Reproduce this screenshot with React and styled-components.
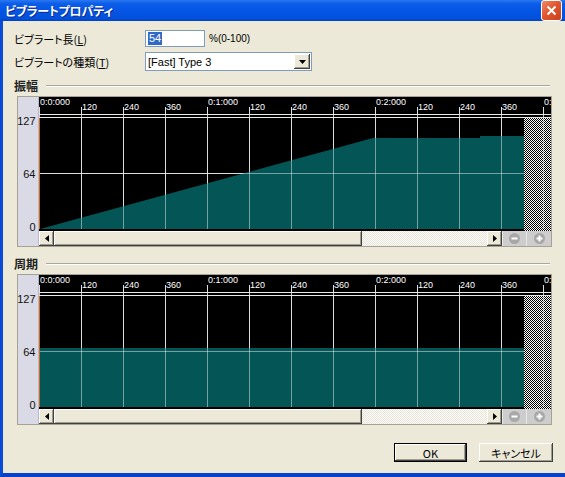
import React from 'react';
import styled, { createGlobalStyle } from 'styled-components';

const UI_FONT = '"Noto Sans CJK JP", "Liberation Sans", sans-serif';
const FACE = '#ece9d8';
const TEAL = '#045556';

const GlobalStyle = createGlobalStyle`
  html, body {
    margin: 0;
    padding: 0;
    background: ${FACE};
  }
  body {
    font-family: ${UI_FONT};
    font-feature-settings: "palt";
  }
`;

const Window = styled.div`
  width: 565px;
  height: 477px;
  display: flex;
  flex-direction: column;
  overflow: hidden;
`;

const TitleBar = styled.div`
  height: 21px;
  flex: none;
  display: flex;
  align-items: center;
  justify-content: space-between;
  padding: 0 3px 0 5px;
  background: linear-gradient(to bottom, #2a78f0 0%, #0b5ce8 18%, #0455e3 55%, #0350dc 88%, #0242c4 100%);
`;

const TitleText = styled.div`
  color: #fff;
  font-size: 12px;
  font-weight: bold;
  line-height: 21px;
  letter-spacing: -0.2px;
  text-shadow: 1px 1px 0 #0a2a8c;
`;

const CloseButton = styled.div`
  width: 19px;
  height: 19px;
  border: 1px solid #fff;
  border-radius: 3px;
  background: linear-gradient(135deg, #f08a6a 0%, #e0572f 45%, #c8401c 100%);
  display: flex;
  align-items: center;
  justify-content: center;
`;

const Frame = styled.div`
  flex: 1;
  display: flex;
  flex-direction: column;
  border-left: 3px solid #0a4bd8;
  border-bottom: 4px solid #0840cc;
  padding: 9px 12px 0 11px;
  background: ${FACE};
`;

const FormGrid = styled.div`
  display: grid;
  grid-template-columns: 131px auto;
  grid-template-rows: 17px 19px;
  row-gap: 5px;
  align-items: center;
`;

const FieldLabel = styled.div`
  font-size: 11px;
  line-height: 14px;
  color: #000;
  white-space: nowrap;
`;

const FieldRow = styled.div`
  display: flex;
  align-items: center;
  gap: 4px;
`;

const NumberBox = styled.div`
  width: 56px;
  height: 15px;
  border: 1px solid #7f9db9;
  background: #fff;
  display: flex;
  align-items: center;
  padding-left: 2px;
`;

const SelectedText = styled.span`
  background: #316ac5;
  color: #fff;
  font-family: "Liberation Sans", sans-serif;
  font-size: 11px;
  line-height: 13px;
  padding: 0 1px;
`;

const Hint = styled.span`
  font-family: "Liberation Sans", sans-serif;
  font-size: 10px;
  color: #000;
`;

const SelectBox = styled.div`
  width: 163px;
  height: 17px;
  border: 1px solid #7f9db9;
  background: #fff;
  display: flex;
  align-items: center;
  justify-content: space-between;
  padding-left: 2px;
`;

const SelectText = styled.span`
  font-family: "Liberation Sans", sans-serif;
  font-size: 11px;
  color: #000;
`;

const raised = `
  background: ${FACE};
  box-shadow: inset -1px -1px #404040, inset 1px 1px #ffffff, inset -2px -2px #a09d90, inset 2px 2px ${FACE};
`;

const DropButton = styled.div`
  width: 16px;
  height: 15px;
  margin-right: 1px;
  ${raised}
  display: flex;
  align-items: center;
  justify-content: center;
`;

const SectionHeader = styled.div`
  display: flex;
  align-items: center;
  gap: 8px;
  height: 14px;
  margin-top: ${(p) => p.top}px;
  padding-right: 3px;
`;

const SectionTitle = styled.span`
  font-size: 12px;
  font-weight: bold;
  line-height: 14px;
  color: #222;
`;

const Etched = styled.div`
  flex: 1;
  height: 0;
  border-top: 1px solid #aca899;
  border-bottom: 1px solid #fff;
`;

const ChartFrame = styled.div`
  margin: 3px 0 0 3px;
  width: 533px;
  border: 1px solid #a5a294;
  display: grid;
  grid-template-columns: 21px 512px;
  grid-template-rows: 134px 15px;
`;

const AxisColumn = styled.div`
  grid-row: 1 / 3;
  background: #dadae6;
  border-right: 1px solid #b8b8c6;
  box-sizing: border-box;
`;

const Plot = styled.svg`
  display: block;
`;

const ScrollRow = styled.div`
  display: flex;
  height: 15px;
`;

const ArrowButton = styled.div`
  width: 15px;
  flex: none;
  ${raised}
  display: flex;
  align-items: center;
  justify-content: center;
`;

const Thumb = styled.div`
  width: ${(p) => p.size}px;
  flex: none;
  ${raised}
`;

const Track = styled.div`
  flex: 1;
  background-color: #fff;
  background-image: repeating-conic-gradient(#e6e3d4 0 25%, #ffffff 0 50%);
  background-size: 2px 2px;
`;

const ZoomButton = styled.div`
  width: ${(p) => p.size}px;
  flex: none;
  background: #cdcdcd;
  border-left: 1px solid #e8e8e8;
  box-sizing: border-box;
  display: flex;
  align-items: center;
  justify-content: center;
`;

const ButtonRow = styled.div`
  display: flex;
  justify-content: flex-end;
  gap: 12px;
  margin-top: 18px;
`;

const DialogButton = styled.div`
  width: ${(p) => p.size}px;
  height: 19px;
  box-sizing: border-box;
  ${raised}
  ${(p) => (p.primary ? 'border: 1px solid #000;' : '')}
  display: flex;
  align-items: center;
  justify-content: center;
  font-size: 11px;
  color: #000;
`;

// ruler: 120 ticks per 42px, a major label every fourth tick
const TICKS = Array.from({ length: 13 }, (_, i) => ({
  x: i * 42,
  major: i % 4 === 0,
  label: i === 12 ? '0:' : i % 4 === 0 ? `0:${i / 4}:000` : String((i % 4) * 120),
}));

const AXIS = [
  { label: '127', y: 25 },
  { label: '64', y: 78 },
  { label: '0', y: 131 },
];

function Axis() {
  return (
    <AxisColumn>
      <svg width="20" height="149">
        {AXIS.map((a) => (
          <text
            key={a.label}
            x="17.5"
            y={a.y}
            textAnchor="end"
            dominantBaseline="middle"
            fontFamily="Liberation Sans, sans-serif"
            fontSize="11"
            fill="#111"
          >
            {a.label}
          </text>
        ))}
      </svg>
    </AxisColumn>
  );
}

function Chart({ id, points }) {
  return (
    <ChartFrame>
      <Axis />
      <Plot width="512" height="134" shapeRendering="crispEdges">
        <defs>
          <pattern id={id} width="2" height="2" patternUnits="userSpaceOnUse">
            <rect width="2" height="2" fill="#fff" />
            <rect width="1" height="1" fill="#000" />
            <rect x="1" y="1" width="1" height="1" fill="#000" />
          </pattern>
        </defs>
        <rect width="512" height="134" fill="#000" />
        {TICKS.map((t) => (
          <line key={`u${t.x}`} x1={t.x + 0.5} x2={t.x + 0.5} y1="10" y2="132" stroke="#c0c0c0" />
        ))}
        <line x1="0" x2="512" y1="76.5" y2="76.5" stroke="#c0c0c0" />
        <polygon points={points} fill={TEAL} shapeRendering="auto" />
        <rect x="485" y="21" width="27" height="113" fill={`url(#${id})`} />
        {TICKS.map((t) => (
          <line key={`o${t.x}`} x1={t.x + 0.5} x2={t.x + 0.5} y1="21" y2="132" stroke="#fff" strokeOpacity="0.45" />
        ))}
        <line x1="0" x2="485" y1="76.5" y2="76.5" stroke="#fff" strokeOpacity="0.45" />
        <line x1="0" x2="512" y1="17.5" y2="17.5" stroke="#e8e8e8" />
        <line x1="0" x2="512" y1="20.5" y2="20.5" stroke="#e8e8e8" />
        <line x1="0.5" x2="0.5" y1="21" y2="132" stroke="#cc6a1a" />
        {TICKS.map((t) => (
          <line key={`t${t.x}`} x1={t.x + 0.5} x2={t.x + 0.5} y1="10" y2="17" stroke="#e0e0e0" />
        ))}
        {TICKS.map((t) => (
          <text
            key={`l${t.x}`}
            x={t.x + 1}
            y={t.major ? 8 : 13}
            fontFamily="Liberation Sans, sans-serif"
            fontSize="9"
            fill="#fff"
          >
            {t.label}
          </text>
        ))}
      </Plot>
      <ScrollRow>
        <ArrowButton>
          <svg width="4" height="7"><polygon points="4,0 0,3.5 4,7" fill="#000" /></svg>
        </ArrowButton>
        <Thumb size={308} />
        <Track />
        <ArrowButton>
          <svg width="4" height="7"><polygon points="0,0 4,3.5 0,7" fill="#000" /></svg>
        </ArrowButton>
        <ZoomButton size={24}>
          <svg width="11" height="11">
            <circle cx="5.5" cy="5.5" r="5.5" fill="#a8a8a8" />
            <rect x="2.5" y="4.5" width="6" height="2" fill="#fff" />
          </svg>
        </ZoomButton>
        <ZoomButton size={25}>
          <svg width="11" height="11">
            <circle cx="5.5" cy="5.5" r="5.5" fill="#a8a8a8" />
            <rect x="2.5" y="4.5" width="6" height="2" fill="#fff" />
            <rect x="4.5" y="2.5" width="2" height="6" fill="#fff" />
          </svg>
        </ZoomButton>
      </ScrollRow>
    </ChartFrame>
  );
}

export default function App() {
  return (
    <>
      <GlobalStyle />
      <Window>
        <TitleBar>
          <TitleText>ビブラートプロパティ</TitleText>
          <CloseButton>
            <svg width="11" height="11">
              <path d="M1.5 1.5 L9.5 9.5 M9.5 1.5 L1.5 9.5" stroke="#fff" strokeWidth="2" />
            </svg>
          </CloseButton>
        </TitleBar>
        <Frame>
          <FormGrid>
            <FieldLabel>ビブラート長(<u>L</u>)</FieldLabel>
            <FieldRow>
              <NumberBox><SelectedText>54</SelectedText></NumberBox>
              <Hint>%(0-100)</Hint>
            </FieldRow>
            <FieldLabel>ビブラートの種類(<u>T</u>)</FieldLabel>
            <SelectBox>
              <SelectText>[Fast] Type 3</SelectText>
              <DropButton>
                <svg width="7" height="4"><polygon points="0,0 7,0 3.5,4" fill="#000" /></svg>
              </DropButton>
            </SelectBox>
          </FormGrid>

          <SectionHeader top={8}>
            <SectionTitle>振幅</SectionTitle>
            <Etched />
          </SectionHeader>
          <Chart id="hatchAmp" points="1,132 334,41 441,41 441,39 485,39 485,132" />

          <SectionHeader top={10}>
            <SectionTitle>周期</SectionTitle>
            <Etched />
          </SectionHeader>
          <Chart id="hatchPer" points="1,132 1,73 485,73 485,132" />

          <ButtonRow>
            <DialogButton size={73} primary>OK</DialogButton>
            <DialogButton size={74}>キャンセル</DialogButton>
          </ButtonRow>
        </Frame>
      </Window>
    </>
  );
}
